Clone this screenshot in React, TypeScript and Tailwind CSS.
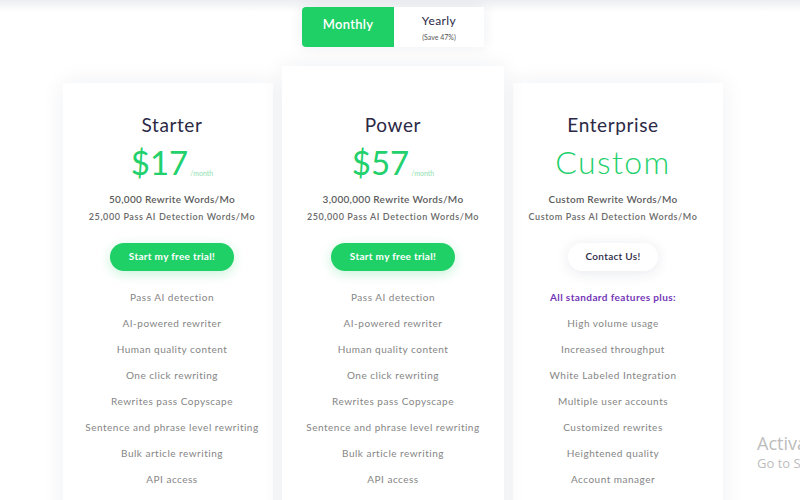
import React from "react";

const starterFeatures = [
    "Pass AI detection",
    "AI-powered rewriter",
    "Human quality content",
    "One click rewriting",
    "Rewrites pass Copyscape",
    "Sentence and phrase level rewriting",
    "Bulk article rewriting",
    "API access",
];

const enterpriseFeatures = [
    "High volume usage",
    "Increased throughput",
    "White Labeled Integration",
    "Multiple user accounts",
    "Customized rewrites",
    "Heightened quality",
    "Account manager",
];

function FeatureList({ items }: { items: string[] }) {
    return (
        <ul className="flex flex-col">
            {items.map((f) => (
                <li key={f} className="h-[26px] leading-[26px] text-[10px] tracking-[0.5px] text-[#858585]">
                    {f}
                </li>
            ))}
        </ul>
    );
}

function PlanCard({
    title,
    price,
    words,
    detection,
    cta,
    features,
    extra = "",
    featured = false,
    custom = false,
}: {
    title: string;
    price: string;
    words: string;
    detection: string;
    cta: string;
    features: string[];
    extra?: string;
    featured?: boolean;
    custom?: boolean;
}) {
    return (
        <div
            className={`flex flex-col items-center bg-white text-center shadow-[0_0_22px_rgba(30,40,80,0.07)] ${
                featured ? "relative z-10 pt-[47px]" : "mt-[17px] pt-[30px]"
            } ${extra}`}
        >
            <h3 className="text-[19px] leading-[24px] tracking-[0.6px] text-[#2b2946]">{title}</h3>
            {custom ? (
                <div className="mt-[5px] h-[40px] text-[32px] font-light leading-[40px] tracking-[1.4px] text-[#22d06c]">{price}</div>
            ) : (
                <div className="mt-[5px] flex h-[40px] items-end">
                    <span className="text-[33px] leading-[40px] text-[#22d06c]">{price}</span>
                    <span className="mb-[4px] ml-[2px] text-[7px] text-[#8fe0b0]">/month</span>
                </div>
            )}
            <p className="mt-[10px] text-[10px] font-semibold tracking-[0.3px] text-[#5c5c5c]">{words}</p>
            <p className="mt-[3px] text-[9px] font-semibold tracking-[0.6px] text-[#6a6a6a]">{detection}</p>
            {custom ? (
                <button className="mt-[19px] h-[28px] w-[90px] rounded-full bg-white text-[10px] font-semibold tracking-[0.3px] text-[#2b2946] shadow-[0_2px_14px_rgba(30,40,80,0.1)]">
                    {cta}
                </button>
            ) : (
                <button className="mt-[19px] h-[28px] w-[124px] rounded-full bg-[#1fd067] text-[10px] font-bold tracking-[0.3px] text-white shadow-[0_3px_12px_rgba(31,208,103,0.25)]">
                    {cta}
                </button>
            )}
            <div className="mt-[13px] w-full pb-10">
                {custom && (
                    <p className="h-[26px] text-[10px] font-bold leading-[26px] tracking-[0.4px] text-[#7436b8]">
                        All standard features plus:
                    </p>
                )}
                <FeatureList items={features} />
            </div>
        </div>
    );
}

export default function App() {
    return (
        <div
            className="relative h-[500px] w-[800px] overflow-hidden bg-white"
            style={{ fontFamily: "Lato, 'Open Sans', sans-serif" }}
        >
            <div className="h-[12px] bg-gradient-to-b from-[#eceef2] to-white" />
            <div className="absolute left-[302px] top-[7px] flex h-[40px] w-[182px] bg-white shadow-[0_0_14px_rgba(30,40,80,0.08)]">
                <button className="h-full w-[92px] rounded-l-[4px] bg-[#1fd067] pb-[4px] text-[13px] font-semibold tracking-[0.3px] text-white">
                    Monthly
                </button>
                <div className="flex flex-1 flex-col items-center justify-center">
                    <span className="text-[12px] leading-[14px] tracking-[0.4px] text-[#2b2946]">Yearly</span>
                    <span className="mt-[5px] text-[7px] leading-[8px] text-[#555]">(Save 47%)</span>
                </div>
            </div>

            <div className="ml-[63px] mt-[54px] grid w-[660px] grid-cols-[210px_220px_210px] gap-[10px]">
                <PlanCard
                    title="Starter"
                    price="$17"
                    words="50,000 Rewrite Words/Mo"
                    detection="25,000 Pass AI Detection Words/Mo"
                    cta="Start my free trial!"
                    features={starterFeatures}
                    extra="pl-[8px]"
                />
                <PlanCard
                    title="Power"
                    price="$57"
                    words="3,000,000 Rewrite Words/Mo"
                    detection="250,000 Pass AI Detection Words/Mo"
                    cta="Start my free trial!"
                    features={starterFeatures}
                    featured
                    extra="-mx-[1px]"
                />
                <PlanCard
                    title="Enterprise"
                    price="Custom"
                    words="Custom Rewrite Words/Mo"
                    detection="Custom Pass AI Detection Words/Mo"
                    cta="Contact Us!"
                    features={enterpriseFeatures}
                    extra="pr-[10px]"
                    custom
                />
            </div>

            <div className="absolute left-[757px] top-[432px] whitespace-nowrap text-[#bdbdbd]" style={{ fontFamily: "'Open Sans', sans-serif" }}>
                <div className="text-[18px] leading-[22px]">Activate Windows</div>
                <div className="text-[13px] leading-[18px]">Go to Settings to activate Windows.</div>
            </div>
        </div>
    );
}
